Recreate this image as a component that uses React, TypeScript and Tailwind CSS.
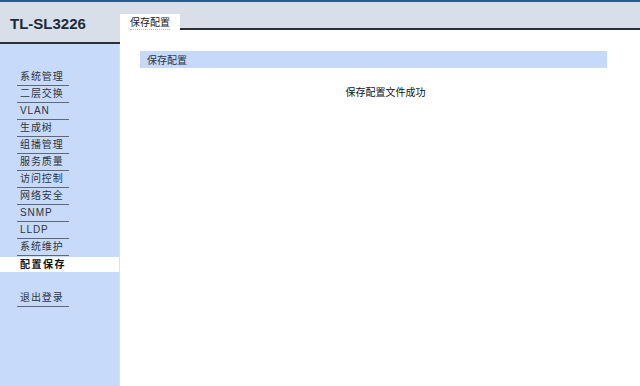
import React from 'react'

const menu = [
  '系统管理',
  '二层交换',
  'VLAN',
  '生成树',
  '组播管理',
  '服务质量',
  '访问控制',
  '网络安全',
  'SNMP',
  'LLDP',
  '系统维护',
]

const cjk = { fontFamily: '"Noto Sans CJK SC", "Liberation Sans", sans-serif' }
const menuFont = { fontFamily: '"Liberation Sans", "Noto Sans CJK SC", sans-serif' }

export default function App() {
  return (
    <div className="w-[640px] h-[386px] flex flex-col bg-white overflow-hidden" style={cjk}>
      {/* top strip */}
      <div className="h-[2px] bg-[#2c5b88]" />

      <div className="flex flex-1">
        {/* left column */}
        <aside className="w-[120px] flex flex-col">
          <div className="h-[42px] bg-[#d8dfe9] border-b-2 border-[#2b2f36] flex items-center pl-[10px] pt-[3px]">
            <span
              className="text-[15px] font-bold text-[#1c2b3c] leading-none"
              style={{ fontFamily: '"Liberation Sans", Arial, sans-serif' }}
            >
              TL-SL3226
            </span>
          </div>

          <nav className="flex-1 bg-[#c7dafa] border-r border-[#d3e2fb] pt-[25px]" style={menuFont}>
            {menu.map(item => (
              <div key={item} className="h-[17px] flex items-end">
                <div className="ml-[17px] w-[52px] h-full pl-[3px] border-b border-[#5d6878] flex items-center text-[10px] tracking-[0.9px] text-[#2e343d] leading-none">
                  {item}
                </div>
              </div>
            ))}
            <div className="h-[15px] mt-[1px] bg-white flex items-center pl-[20px] text-[10px] font-bold tracking-[1.5px] text-[#111] leading-none">
              配置保存
            </div>
            <div className="h-[17px] mt-[18px]">
              <div className="ml-[17px] w-[52px] h-full pl-[3px] border-b border-[#5d6878] flex items-center text-[10px] tracking-[0.9px] text-[#2e343d] leading-none">
                退出登录
              </div>
            </div>
          </nav>
        </aside>

        {/* right column */}
        <main className="flex-1 flex flex-col">
          <div className="h-[28px] bg-[#d8dfe9] flex items-end">
            <div className="w-[60px] h-[18px] bg-white flex items-center pl-[10px] -mb-[2px]">
              <span className="text-[10px] text-[#222] leading-none border-b border-dotted border-[#b9c2cc] pb-[2px]">
                保存配置
              </span>
            </div>
            <div className="flex-1 border-b-2 border-[#2b2f36]" />
          </div>

          <div className="flex-1 bg-white pt-[21px] pl-[20px] pr-[33px]">
            <div className="h-[17px] bg-[#c6d9fb] flex items-center pl-[7px] text-[10px] text-[#2a3444] leading-none">
              保存配置
            </div>
            <div className="mt-[19px] pl-[24px] text-center text-[10px] text-[#111] leading-none">
              保存配置文件成功
            </div>
          </div>
        </main>
      </div>
    </div>
  )
}
